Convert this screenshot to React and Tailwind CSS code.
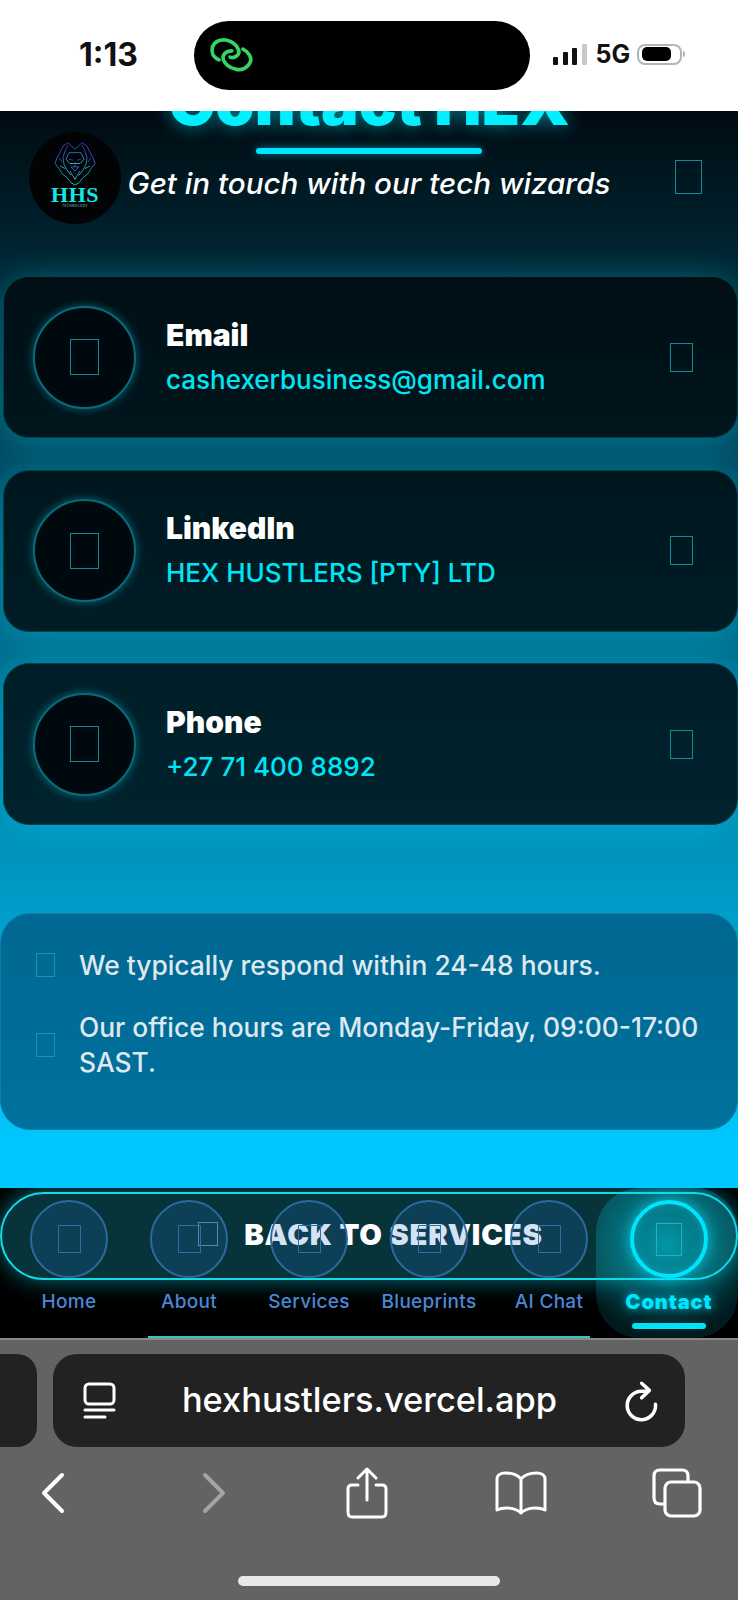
import React from 'react';

const font = { fontFamily: 'Inter, "Noto Sans", sans-serif' };

const cards = [
  { label: 'Email', value: 'cashexerbusiness@gmail.com' },
  { label: 'LinkedIn', value: 'HEX HUSTLERS [PTY] LTD' },
  { label: 'Phone', value: '+27 71 400 8892' },
];

const tabs = ['Home', 'About', 'Services', 'Blueprints', 'AI Chat', 'Contact'];

function Tofu({ className }) {
  return <span className={`block shrink-0 border ${className}`} />;
}

function StatusBar() {
  return (
    <div className="relative flex h-[111px] shrink-0 items-center bg-white">
      <span className="ml-[79px] mt-[-2px] w-[115px] text-[32px] font-bold leading-none text-[#111]">1:13</span>
      <div className="mt-[-1px] flex h-[69px] w-[336px] items-center rounded-[35px] bg-black pl-[15px]">
        <svg width="45" height="36" viewBox="42 24 134 107" fill="none" stroke="#34d564" strokeWidth="11" strokeLinecap="round">
          <path d="M72 92 C55 85 48 70 52 55 C58 38 75 30 92 33 C110 37 125 48 130 62 C135 78 118 88 105 84" />
          <path d="M143 60 C160 68 170 85 165 98 C158 115 140 125 122 120 C105 116 90 105 85 92 C80 75 95 65 110 65" />
        </svg>
      </div>
      <div className="ml-[23px] mt-[-3px] flex items-end gap-[4.5px]">
        <span className="h-[8px] w-[5px] rounded-[1px] bg-[#111]" />
        <span className="h-[13px] w-[5px] rounded-[1px] bg-[#111]" />
        <span className="h-[17px] w-[5px] rounded-[1px] bg-[#111]" />
        <span className="h-[21px] w-[5px] rounded-[1px] bg-[#c9c9c9]" />
      </div>
      <span className="ml-[9px] mt-[-3px] w-[32px] text-[25px] font-bold leading-none text-[#111]">5G</span>
      <div className="ml-[9px] mt-[-3px] flex h-[21px] w-[45px] items-center rounded-[8px] border-2 border-[#b5b5b5] pl-[3px]">
        <span className="h-[14px] w-[29px] rounded-[5px] bg-black" />
      </div>
      <span className="ml-[1px] mt-[-3px] h-[6px] w-[2px] rounded-r bg-[#b5b5b5]" />
    </div>
  );
}

function Logo() {
  return (
    <div className="absolute left-[29px] top-[21px] flex h-[92px] w-[92px] flex-col items-center rounded-full bg-[#010304]">
      <svg className="mt-[9px]" width="42" height="45" viewBox="0 0 42 54" preserveAspectRatio="none" fill="none" strokeWidth="0.9" stroke="url(#lion)">
        <defs>
          <linearGradient id="lion" x1="0" y1="0" x2="0" y2="1">
            <stop offset="0" stopColor="#4a3fd0" />
            <stop offset="0.5" stopColor="#2f7fd8" />
            <stop offset="1" stopColor="#1be6d8" />
          </linearGradient>
        </defs>
        <path d="M14 2 L9 6 L6 14 L3 20 L1 27 L5 33 L8 39 L13 44 L17 50 L21 53 L25 50 L29 44 L34 39 L37 33 L41 27 L39 20 L36 14 L33 6 L28 2" />
        <path d="M14 5 L11 12 L9 20 L10 28 L13 35 L17 41 M28 5 L31 12 L33 20 L32 28 L29 35 L25 41" />
        <path d="M14 2 L21 10 L28 2 M15 14 H27 L30 22 L26 27 H16 L12 22 Z" />
        <path d="M15 22 L19 23 M27 22 L23 23 M21 25 V31 M17 31 H25 L21 36 Z M16 36 L21 46 L26 36" />
        <path d="M5 20 L8 25 M37 20 L34 25 M6 30 L11 33 M36 30 L31 33" />
      </svg>
      <span className="text-[22px] font-bold leading-[18px] tracking-[0.5px] text-[#15e8e4]" style={{ fontFamily: '"Liberation Serif", serif' }}>HHS</span>
      <span className="text-[3px] leading-[4px] tracking-[0.5px] text-[#9adfe0]">TECHNOLOGY</span>
    </div>
  );
}

function ContactCard({ label, value }) {
  return (
    <div className="flex h-[162px] items-center rounded-[26px] border border-[#04414d] bg-[#00090d]/80 pl-[29px] pr-[44px] shadow-[0_4px_34px_rgba(0,220,255,0.36)]">
      <div className="flex h-[103px] w-[103px] shrink-0 items-center justify-center rounded-full border-2 border-[#0a6a78] bg-[#00090d] shadow-[0_0_10px_rgba(0,220,255,0.4)]">
        <Tofu className="h-[36px] w-[29px] border-[#0f8a98]" />
      </div>
      <div className="ml-[30px] flex-1">
        <div className="mt-[-2px] text-[30px] font-black leading-[36px] text-white">{label}</div>
        <div className="mt-[11px] text-[26px] font-medium leading-[32px] text-[#00e5f5]">{value}</div>
      </div>
      <Tofu className="h-[29px] w-[23px] border-[#0f8a98]" />
    </div>
  );
}

function NavTab({ label, active }) {
  return (
    <div className="flex flex-col items-center">
      {active ? (
        <div className="flex h-[78px] w-[78px] items-center justify-center rounded-full border-4 border-[#00e5ff] shadow-[0_0_14px_rgba(0,229,255,0.7),inset_0_0_12px_rgba(0,229,255,0.35)]">
          <Tofu className="h-[33px] w-[26px] border-[#19b5c0]" />
        </div>
      ) : (
        <div className="flex h-[78px] w-[78px] items-center justify-center rounded-full border-2 border-[#2a6a9c] bg-[#2a6cc8]/20">
          <Tofu className="h-[28px] w-[23px] border-[#2f6fa8]" />
        </div>
      )}
      <span className={`mt-[12px] leading-[24px] ${active ? 'text-[20px] font-black tracking-[0.9px] text-[#00e5ff] [text-shadow:0_0_8px_rgba(0,229,255,0.7)]' : 'text-[19px] font-medium tracking-[0.3px] text-[#4c86d6]'}`}>
        {label}
      </span>
      {active && <span className="mt-[9px] h-[6px] w-[74px] rounded-full bg-[#00e5f5]" />}
    </div>
  );
}

function BottomNav() {
  return (
    <div className="relative h-[150px] shrink-0 overflow-hidden bg-black">
      {/* back button sits behind the tab row */}
      <div className="absolute left-0 top-[4px] flex h-[88px] w-[738px] items-center justify-center gap-[26px] rounded-[44px] border-2 border-[#12dbe6] bg-[#07343a] pb-[2px] pl-[3px] shadow-[0_0_22px_rgba(0,229,255,0.5)]">
        <Tofu className="mt-[-2px] h-[24px] w-[20px] border-[#5f8fb0]" />
        <span className="text-[29.2px] font-black leading-none tracking-[0.8px] text-white">BACK TO SERVICES</span>
      </div>
      <div className="absolute bottom-0 left-[596px] top-0 w-[142px] rounded-[44px] bg-[radial-gradient(circle_at_50%_38%,rgba(0,229,255,0.55),rgba(0,190,210,0.14)_78%)]" />
      <div className="absolute inset-0 bg-[repeating-linear-gradient(90deg,transparent_0,transparent_49px,rgba(0,229,255,0.16)_49px,rgba(0,229,255,0.16)_50px)] bg-[length:49.25px_100%]" />
      <div className="relative grid grid-cols-6 pl-[9px] pr-[9px] pt-[12px]">
        {tabs.map((t) => (
          <NavTab key={t} label={t} active={t === 'Contact'} />
        ))}
      </div>
      <div className="absolute bottom-0 left-[148px] h-[2px] w-[442px] bg-[#35c4c8]" />
    </div>
  );
}

function SafariBar() {
  return (
    <div className="flex-1 border-t-2 border-[#8a8a8a] bg-[#636363]">
      <div className="mt-[14px] flex h-[93px] gap-[16px]">
        <div className="ml-[-20px] w-[57px] rounded-r-[20px] bg-[#222]" />
        <div className="flex w-[632px] items-center rounded-[24px] bg-[#222] pl-[30px] pr-[15px]">
          <svg width="33" height="38" viewBox="0 0 33 38" fill="none" stroke="white" strokeWidth="3" strokeLinecap="round">
            <rect x="2" y="2" width="29" height="20" rx="4" />
            <path d="M2 28 H31 M2 35 H22" />
          </svg>
          <span className="flex-1 pl-[11px] text-center text-[34.4px] font-medium leading-none text-white">hexhustlers.vercel.app</span>
          <svg width="58" height="58" viewBox="0 0 180 180" fill="none" stroke="white" strokeWidth="11" strokeLinecap="round" strokeLinejoin="round">
            <path d="M135 100 A44 44 0 1 1 92 60 H108" />
            <path d="M92 35 L116 57 L92 80" />
          </svg>
        </div>
      </div>
      <div className="ml-[-25px] mt-[20px] grid w-[780px] grid-cols-5 items-center justify-items-center">
        <svg width="24" height="42" viewBox="0 0 24 42" fill="none" stroke="white" strokeWidth="4" strokeLinecap="round" strokeLinejoin="round">
          <path d="M21 3 L3 21 L21 39" />
        </svg>
        <svg className="ml-[10px]" width="24" height="42" viewBox="0 0 24 42" fill="none" stroke="#a3a3a3" strokeWidth="4" strokeLinecap="round" strokeLinejoin="round">
          <path d="M3 3 L21 21 L3 39" />
        </svg>
        <svg className="ml-[4px]" width="42" height="52" viewBox="0 0 42 52" fill="none" stroke="white" strokeWidth="3" strokeLinecap="round" strokeLinejoin="round">
          <path d="M12 18 H6 C3 18 2 20 2 22 V45 C2 48 3 50 6 50 H36 C39 50 40 48 40 45 V22 C40 20 39 18 36 18 H30" />
          <path d="M21 33 V3 M12 11 L21 2 L30 11" />
        </svg>
        <svg width="52" height="44" viewBox="0 0 52 44" fill="none" stroke="white" strokeWidth="3" strokeLinecap="round" strokeLinejoin="round">
          <path d="M26 8 C22 3 16 2 10 2 C6 2 2 4 2 8 V39 C8 36 20 36 26 42 C32 36 44 36 50 39 V8 C50 4 46 2 42 2 C36 2 30 3 26 8 Z M26 8 V42" />
        </svg>
        <svg width="50" height="50" viewBox="0 0 50 50" fill="none" stroke="white" strokeWidth="3.2" strokeLinejoin="round">
          <path d="M13 36 H8 C4 36 2 34 2 30 V8 C2 4 4 2 8 2 H30 C34 2 36 4 36 8 V14" />
          <rect x="13" y="14" width="35" height="34" rx="6" />
        </svg>
      </div>
      <div className="mx-auto mt-[57px] h-[10px] w-[262px] rounded-full bg-[#e8e8e8]" />
    </div>
  );
}

export default function App() {
  return (
    <div className="flex h-[1600px] w-[738px] flex-col overflow-hidden bg-[#636363]" style={font}>
      <StatusBar />

      <main className="h-[1077px] shrink-0 overflow-hidden bg-[linear-gradient(180deg,#000b11_0%,#00c8ff_96%)]">
        {/* Header, title runs up under the status bar */}
        <div className="relative flow-root h-[165px] text-center">
          <h1 className="mt-[-46px] text-[63px] font-black leading-[74px] text-[#00f0ff] [text-shadow:0_0_18px_rgba(0,229,255,0.6)]">Contact HEX</h1>
          <div className="mx-auto mt-[9px] h-[6px] w-[226px] rounded-full bg-[#00e5ff] shadow-[0_0_8px_rgba(0,229,255,0.5)]" />
          <p className="mt-[10px] text-[29.6px] font-medium italic leading-[38px] text-white">Get in touch with our tech wizards</p>
          <Logo />
          <Tofu className="absolute left-[675px] top-[49px] h-[34px] w-[27px] border-[#0b8c97]" />
        </div>

        {/* Contact cards */}
        <div className="ml-[3px] flex flex-col gap-[31.5px]">
          {cards.map((c) => (
            <ContactCard key={c.label} label={c.label} value={c.value} />
          ))}
        </div>

        {/* Info panel */}
        <div className="mt-[88px] flex h-[217px] flex-col justify-center gap-[27px] rounded-[30px] border border-[#0a7fa8] bg-[#00557f]/75 pb-[16px] pl-[35px] pr-[30px]">
          <div className="flex items-center gap-[24px]">
            <Tofu className="h-[24px] w-[19px] border-[#0a9ab8]" />
            <span className="text-[26.4px] font-medium leading-[35px] text-[#dfe8ee]">We typically respond within 24-48 hours.</span>
          </div>
          <div className="flex items-center gap-[24px]">
            <Tofu className="h-[24px] w-[19px] border-[#0a9ab8]" />
            <span className="text-[26.4px] font-medium leading-[35px] text-[#dfe8ee]">Our office hours are Monday-Friday, 09:00-17:00 SAST.</span>
          </div>
        </div>
      </main>

      <BottomNav />
      <SafariBar />
    </div>
  );
}
